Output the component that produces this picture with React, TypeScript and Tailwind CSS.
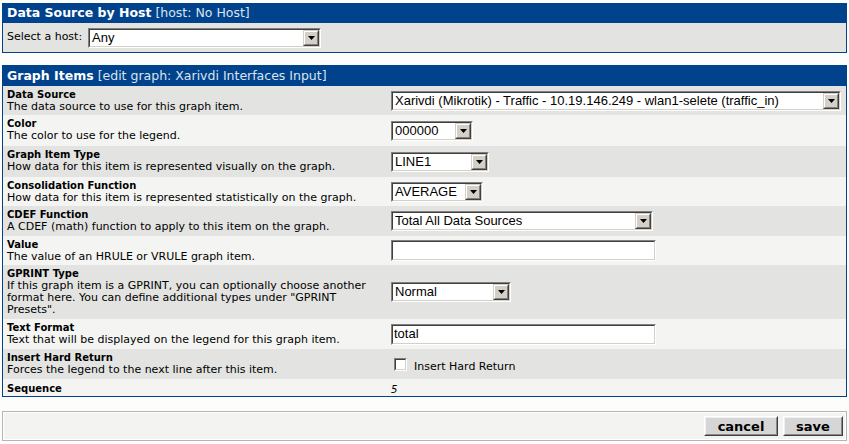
import React from 'react';

const Caret = () => (
  <svg width="7" height="4" viewBox="0 0 7 4">
    <path d="M0 0h7L3.5 4z" fill="#000" />
  </svg>
);

const Select: React.FC<{ value: string; className: string }> = ({ value, className }) => (
  <div className={`h-[20px] flex border border-t-[#808080] border-l-[#808080] border-b-white border-r-white ${className}`}>
    <div className="flex-1 flex border border-t-[#404040] border-l-[#404040] border-b-[#d4d0c8] border-r-[#d4d0c8] bg-white min-w-0">
      <span className="flex-1 pl-[2px] text-[13px] leading-[16px] font-['Liberation_Sans',Arial,sans-serif] text-black whitespace-nowrap overflow-hidden">
        {value}
      </span>
      <div className="w-[16px] h-[16px] border border-t-[#d4d0c8] border-l-[#d4d0c8] border-b-[#404040] border-r-[#404040] bg-[#d4d0c8]">
        <div className="w-full h-full flex items-center justify-center border border-t-white border-l-white border-b-[#808080] border-r-[#808080]">
          <Caret />
        </div>
      </div>
    </div>
  </div>
);

const TextInput: React.FC<{ value?: string }> = ({ value }) => (
  <div className="w-[265px] h-[21px] flex border border-t-[#808080] border-l-[#808080] border-b-white border-r-white">
    <div className="flex-1 flex items-center border border-t-[#404040] border-l-[#404040] border-b-[#d4d0c8] border-r-[#d4d0c8] bg-white">
      <span className="pl-[1px] text-[13px] leading-[16px] font-['Liberation_Sans',Arial,sans-serif] text-black">{value}</span>
    </div>
  </div>
);

type Row = {
  title: string;
  desc?: React.ReactNode;
  h: string;
  field: React.ReactNode;
};

const rows: Row[] = [
  {
    title: 'Data Source',
    desc: 'The data source to use for this graph item.',
    h: 'h-[29px]',
    field: <Select value="Xarivdi (Mikrotik) - Traffic - 10.19.146.249 - wlan1-selete (traffic_in)" className="w-[450px]" />,
  },
  {
    title: 'Color',
    desc: 'The color to use for the legend.',
    h: 'h-[31px]',
    field: <Select value="000000" className="w-[82px]" />,
  },
  {
    title: 'Graph Item Type',
    desc: 'How data for this item is represented visually on the graph.',
    h: 'h-[31px]',
    field: <Select value="LINE1" className="w-[98px]" />,
  },
  {
    title: 'Consolidation Function',
    desc: 'How data for this item is represented statistically on the graph.',
    h: 'h-[29px]',
    field: <Select value="AVERAGE" className="w-[92px]" />,
  },
  {
    title: 'CDEF Function',
    desc: 'A CDEF (math) function to apply to this item on the graph.',
    h: 'h-[30px]',
    field: <Select value="Total All Data Sources" className="w-[262px]" />,
  },
  {
    title: 'Value',
    desc: 'The value of an HRULE or VRULE graph item.',
    h: 'h-[29px]',
    field: <TextInput />,
  },
  {
    title: 'GPRINT Type',
    desc: (
      <>
        If this graph item is a GPRINT, you can optionally choose another
        <br />
        format here. You can define additional types under "GPRINT
        <br />
        Presets".
      </>
    ),
    h: 'h-[54px]',
    field: <Select value="Normal" className="w-[120px]" />,
  },
  {
    title: 'Text Format',
    desc: 'Text that will be displayed on the legend for this graph item.',
    h: 'h-[30px]',
    field: <TextInput value="total" />,
  },
  {
    title: 'Insert Hard Return',
    desc: 'Forces the legend to the next line after this item.',
    h: 'h-[30px]',
    field: (
      <div className="flex items-center">
        <div className="ml-[3px] w-[13px] h-[13px] border border-t-[#808080] border-l-[#808080] border-b-white border-r-white">
          <div className="w-full h-full bg-white border border-t-[#404040] border-l-[#404040] border-b-[#d4d0c8] border-r-[#d4d0c8]" />
        </div>
        <span className="ml-[7px] mt-[6px] text-[11px] leading-[12px]">Insert Hard Return</span>
      </div>
    ),
  },
  {
    title: 'Sequence',
    h: 'h-[17px]',
    field: <span className="pt-[5px] text-[10px] leading-[12px] italic">5</span>,
  },
];

export default function App() {
  return (
    <div className="min-h-[444px] w-full bg-[#fdfefb] px-[2px] pt-[3px] text-black font-['DejaVu_Sans',Verdana,sans-serif]">
      <div className="border border-[#00438c]">
        <div className="h-[19px] bg-[#00438c] flex items-center pl-[4px] text-[12.5px] text-white whitespace-nowrap">
          <span className="font-bold">Data Source by Host</span>
          <span className="ml-[4px] text-[#dde4ee]">[host: No Host]</span>
        </div>
        <div className="h-[29px] bg-[#e3e4e1] flex items-center pl-[4px]">
          <span className="w-[81px] text-[11px]">Select a host:</span>
          <Select value="Any" className="w-[233px]" />
        </div>
      </div>

      <div className="mt-[12px] border border-[#00438c]">
        <div className="h-[20px] bg-[#00438c] flex items-center pl-[4px] text-[12.5px] text-white whitespace-nowrap">
          <span className="font-bold">Graph Items</span>
          <span className="ml-[4px] text-[#dde4ee]">[edit graph: Xarivdi Interfaces Input]</span>
        </div>
        {rows.map((r, i) => (
          <div key={r.title} className={`flex ${r.h} ${i % 2 === 0 ? 'bg-[#e3e4e1]' : 'bg-[#f4f5f2]'}`}>
            <div className={`w-[384px] pl-[4px] ${r.desc ? 'pt-[3px]' : 'pt-[4px]'} leading-[12px] whitespace-nowrap`}>
              <div className="font-bold text-[10px]">{r.title}</div>
              {r.desc && <div className="text-[11px]">{r.desc}</div>}
            </div>
            <div className={`flex-1 pl-[4px] flex ${r.desc ? 'items-center' : 'items-start'}`}>{r.field}</div>
          </div>
        ))}
      </div>

      <div className="mt-[14px] h-[30px] border border-[#b4b4b4]">
        <div className="h-full border border-white bg-[#f3f4f2] flex items-center justify-end gap-[5px] pr-[2px]">
          {['cancel', 'save'].map((b) => (
            <div
              key={b}
              className={`${b === 'cancel' ? 'w-[74px]' : 'w-[60px]'} h-[20px] border border-t-white border-l-white border-b-[#404040] border-r-[#404040] bg-[#d6d6d6]`}
            >
              <div className="h-full flex items-center justify-center border border-t-[#f0f0f0] border-l-[#f0f0f0] border-b-[#8a8a8a] border-r-[#8a8a8a] text-[13px] font-bold leading-none">
                {b}
              </div>
            </div>
          ))}
        </div>
      </div>
    </div>
  );
}
